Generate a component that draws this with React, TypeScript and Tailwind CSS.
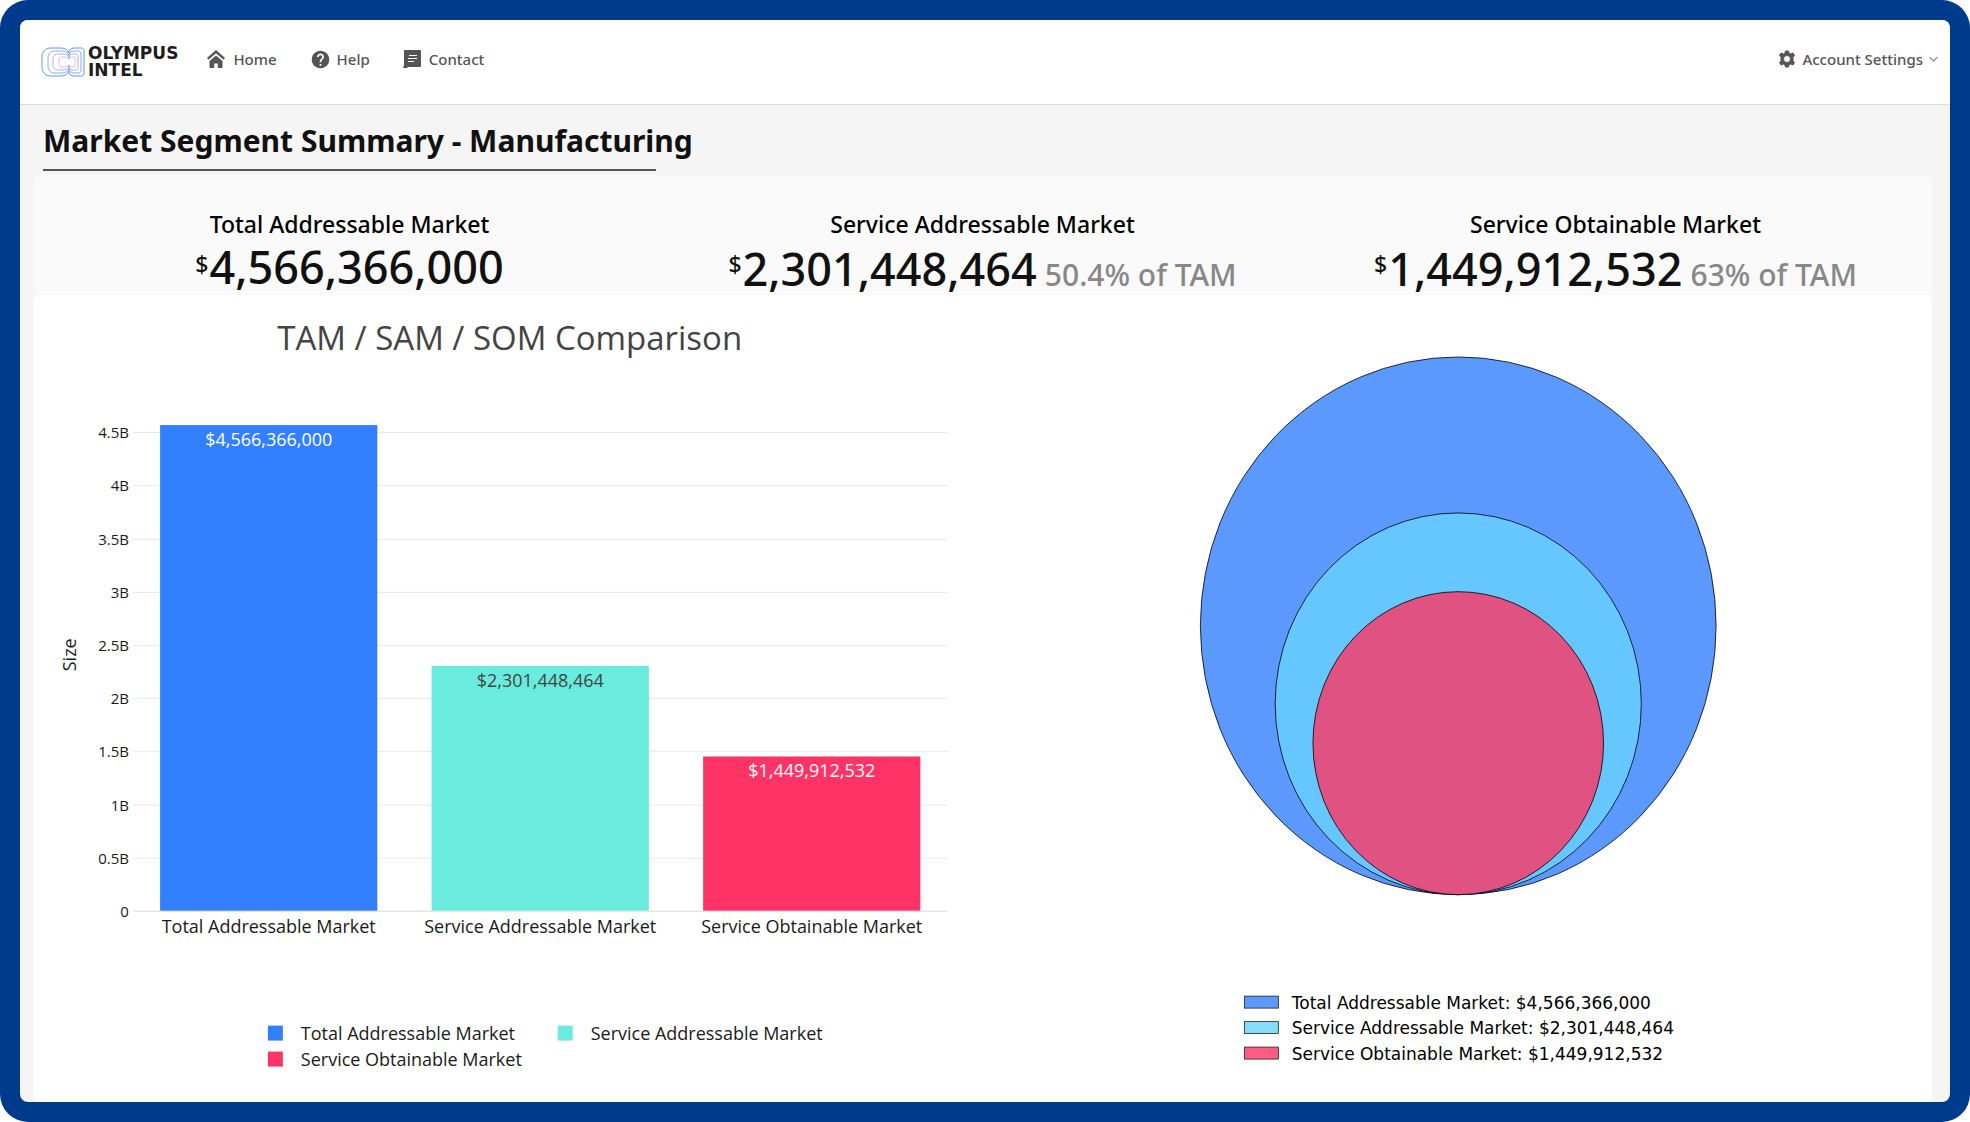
import { MdHelp } from 'react-icons/md'

interface Segment {
  name: string
  value: number
  share?: string
  bar: string
  label: string
  circle: string
  swatch: string
}

const SEGMENTS: Segment[] = [
  {
    name: 'Total Addressable Market',
    value: 4566366000,
    bar: '#3380ff',
    label: '#ffffff',
    circle: '#5c99ff',
    swatch: '#5c99ff',
  },
  {
    name: 'Service Addressable Market',
    value: 2301448464,
    share: '50.4% of TAM',
    bar: '#69ebdd',
    label: '#444444',
    circle: '#66c7ff',
    swatch: '#85dcff',
  },
  {
    name: 'Service Obtainable Market',
    value: 1449912532,
    share: '63% of TAM',
    bar: '#ff3366',
    label: '#ffffff',
    circle: '#e05282',
    swatch: '#ff5c85',
  },
]

const TICKS = [0, 0.5, 1, 1.5, 2, 2.5, 3, 3.5, 4, 4.5]

// bar chart plot area, in svg units
const PLOT = { left: 100, right: 915, base: 616, perBillion: 106.4 }

const format = (value: number) => value.toLocaleString('en-US')

function Logo() {
  return (
    <a href="#" className="mt-[6px] flex items-center gap-[3px] text-[#1f1b1c]" aria-label="Olympus Intel">
      <svg width="44" height="30" viewBox="0 0 44 30" fill="none" strokeWidth="1">
        <path stroke="#5b98fb" d="M28 6C27 3 24 1 20 1H10C4 1 1 5 1 10v10c0 5 3 9 9 9h10c4 0 7-2 8-5M28 6c0-3 2-5 5-5h7c2 0 3 1 3 3v22c0 2-1 3-3 3h-7c-3 0-5-2-5-5" />
        <path stroke="#8aaaf7" d="M28 8c-1-2-3-4-7-4h-7c-5 0-7 3-7 7v8c0 4 2 7 7 7h7c4 0 6-2 7-4M28 8c1-2 2-4 5-4h4c2 0 3 1 3 3v16c0 2-1 3-3 3h-4c-3 0-4-2-5-4" />
        <path stroke="#b0aff0" d="M28 10c-1-2-3-3-6-3h-4c-4 0-6 2-6 5v6c0 3 2 5 6 5h4c3 0 5-1 6-3M28 10c1-2 2-3 4-3h3c1 0 2 1 2 2v12c0 1-1 2-2 2h-3c-2 0-3-1-4-3" />
        <path stroke="#dcbde6" d="M28 12c-1-1-2-2-5-2h-2c-2 0-3 1-3 3v4c0 2 1 3 3 3h2c3 0 4-1 5-2M28 12c1-1 2-2 3-2h2c1 0 1 0 1 1v8c0 1 0 1-1 1h-2c-1 0-2-1-3-2" />
        <path stroke="#7f9df5" d="M28 6v6M28 18v6" />
      </svg>
      <span className="flex flex-col font-['DejaVu_Sans',sans-serif] text-[17px] leading-[17px] font-bold">
        <span>OLYMPUS</span>
        <span>INTEL</span>
      </span>
    </a>
  )
}

function HomeIcon() {
  return (
    <svg width="18" height="18" viewBox="0 0 18 18" fill="#555">
      <path d="M9 0 0 8l1.5 1.7L9 3.2l7.5 6.5L18 8z" />
      <path d="M9 5.5 2.5 11v7h4.700v-4.500h3.600V18h4.700v-7z" />
    </svg>
  )
}

function ContactIcon() {
  return (
    <svg width="18" height="18" viewBox="0 0 18 18" fill="#555">
      <path
        fillRule="evenodd"
        d="M2 0h15a1 1 0 0 1 1 1v15a1 1 0 0 1-1 1H5l-1 1H0l1-3V1a1 1 0 0 1 1-1zM6 5v1h8V5zM5 8v1h9V8zM5 11v1h6v-1z"
      />
    </svg>
  )
}

function GearIcon() {
  return (
    <svg width="18" height="18" viewBox="0 0 18 18" fill="#555" stroke="#555" strokeLinejoin="round">
      <path
        fillRule="evenodd"
        d="M7.500 1h3l.5 2 1.500 1 2.500-1 1.500 2.500L15 7v4l1.500 1.500L15 15l-2.500-1-1.500 1-.5 2h-3L7 15l-1.500-1L3 15l-1.500-2.500L3 11V7L1.500 5.500 3 3l2.500 1L7 3zM9 5.500a3.500 3.500 0 1 0 0 7 3.500 3.500 0 0 0 0-7z"
      />
    </svg>
  )
}

function Header() {
  return (
    <header className="flex h-[85px] items-center justify-between border-b border-[#dddddd] bg-white pr-3 pb-[6px] pl-[21px] text-[15px] font-medium text-[#555555]">
      <div className="flex items-center">
        <Logo />
        <nav className="ml-[29px] flex items-center gap-[33px]">
          <a href="#" className="flex items-center gap-2">
            <HomeIcon />
            Home
          </a>
          <a href="#" className="flex items-center gap-[6px]">
            <MdHelp size={21} />
            Help
          </a>
          <a href="#" className="flex items-center gap-2">
            <ContactIcon />
            Contact
          </a>
        </nav>
      </div>
      <button type="button" className="flex items-center gap-[6px]">
        <GearIcon />
        Account Settings
        <svg width="9" height="6" viewBox="0 0 9 6" fill="none" stroke="#999" strokeWidth="1.5">
          <path d="m.5 1 4 4 4-4" />
        </svg>
      </button>
    </header>
  )
}

function Stat({ segment }: { segment: Segment }) {
  return (
    <div className="whitespace-nowrap">
      <h2 className="text-center text-[23px] leading-9 font-medium text-black">{segment.name}</h2>
      <p
        className={`flex items-baseline justify-center text-[45px] font-medium text-[#111111] ${
          segment.share ? 'leading-[53px]' : 'leading-[50px]'
        }`}
      >
        <span className="mr-px self-start pt-[10px] text-[23px] leading-6">$</span>
        {format(segment.value)}
        {segment.share && <span className="ml-2 text-[30px] leading-9 text-[#888888]">{segment.share}</span>}
      </p>
    </div>
  )
}

function BarChart() {
  const step = (PLOT.right - PLOT.left) / SEGMENTS.length
  const barWidth = step * 0.8

  return (
    <svg
      viewBox="0 0 950 807"
      className="w-full font-['Open_Sans',sans-serif]"
      fill="#1a1a1a"
      role="img"
      aria-label="TAM / SAM / SOM Comparison"
    >
      <text x="477" y="55" textAnchor="middle" fontSize="33" fill="#444">
        TAM / SAM / SOM Comparison
      </text>
      <text transform="translate(43 360) rotate(-90)" textAnchor="middle" fontSize="18">
        Size
      </text>

      {TICKS.map((tick) => {
        const y = Math.round(PLOT.base - tick * PLOT.perBillion)
        return (
          <g key={tick}>
            <rect x={PLOT.left} y={y} width={PLOT.right - PLOT.left} height="1" fill={tick ? '#e8e8e8' : '#d8d8d8'} />
            <text x="96" y={y + 6} textAnchor="end" fontSize="15">
              {tick ? `${tick}B` : '0'}
            </text>
          </g>
        )
      })}

      {SEGMENTS.map((segment, i) => {
        const center = PLOT.left + step * (i + 0.5)
        const height = (segment.value / 1e9) * PLOT.perBillion
        const top = PLOT.base - height
        return (
          <g key={segment.name}>
            <rect x={center - barWidth / 2} y={top} width={barWidth} height={height} fill={segment.bar} />
            <text x={center} y={top + 21} textAnchor="middle" fontSize="18" fill={segment.label}>
              ${format(segment.value)}
            </text>
            <text x={center} y="638" textAnchor="middle" fontSize="18">
              {segment.name}
            </text>
          </g>
        )
      })}

      {SEGMENTS.map((segment, i) => {
        const x = 235 + (i % 2) * 290
        const y = 731 + Math.floor(i / 2) * 26
        return (
          <g key={segment.name}>
            <rect x={x} y={y} width="15" height="15" fill={segment.bar} />
            <text x={x + 33} y={y + 14} fontSize="18">
              {segment.name}
            </text>
          </g>
        )
      })}
    </svg>
  )
}

function NestedCircles() {
  return (
    <svg viewBox="0 0 950 807" className="w-full font-['DejaVu_Sans',sans-serif]" role="img" aria-label="Market sizes as nested circles">
      {SEGMENTS.map((segment) => {
        // radius grows with the square root, so areas compare
        const scale = Math.sqrt(segment.value / SEGMENTS[0].value)
        const ry = 269 * scale
        return (
          <ellipse
            key={segment.name}
            cx="475.5"
            cy={600 - ry}
            rx={258 * scale}
            ry={ry}
            fill={segment.circle}
            stroke="#000"
            strokeWidth="0.8"
          />
        )
      })}
      {SEGMENTS.map((segment, i) => (
        <g key={segment.name}>
          <rect x="261.5" y={701.5 + i * 25.5} width="34" height="12" fill={segment.swatch} stroke="#222" strokeWidth="0.8" />
          <text x="309" y={714 + i * 25.5} fontSize="17">
            {segment.name}: ${format(segment.value)}
          </text>
        </g>
      ))}
    </svg>
  )
}

export default function App() {
  return (
    <div className="min-h-screen bg-white font-['Noto_Sans',sans-serif]">
      <div className="flex min-h-screen flex-col rounded-[28px] bg-[#003a8c] p-5">
        <div className="flex-1 overflow-hidden rounded-lg bg-[#f5f5f5]">
          <Header />
          <main className="pr-[18px] pl-[13px]">
            <h1 className="mb-1 ml-[10px] w-[613px] border-b-2 border-[#555555] pt-3 pb-1 text-[30px] leading-[48px] font-bold whitespace-nowrap text-[#111111]">
              Market Segment Summary - Manufacturing
            </h1>
            <section className="grid grid-cols-3 rounded-md bg-[#fafafa] pt-[31px]">
              {SEGMENTS.map((segment) => (
                <Stat key={segment.name} segment={segment} />
              ))}
            </section>
            <section className="grid grid-cols-2 rounded-md bg-white">
              <BarChart />
              <NestedCircles />
            </section>
          </main>
        </div>
      </div>
    </div>
  )
}
